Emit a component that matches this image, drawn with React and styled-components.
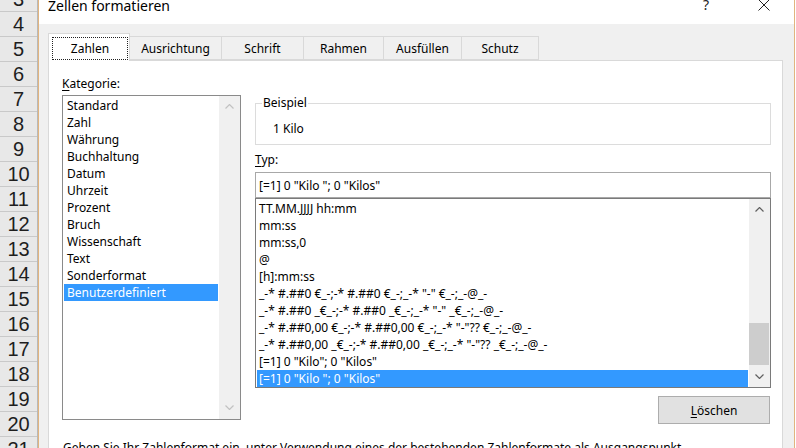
import React from 'react';
import styled, { createGlobalStyle } from 'styled-components';

const UI = `"Noto Sans", "Open Sans", sans-serif`;

const Global = createGlobalStyle`
  html, body { margin: 0; padding: 0; background: #fff; }
  body { width: 796px; height: 448px; overflow: hidden; font-family: ${UI}; }
  * { box-sizing: border-box; }
`;

const Page = styled.div`
  display: flex;
  width: 796px;
  height: 448px;
  overflow: hidden;
  background: #fff;
`;

const RowHeader = styled.div`
  flex: none;
  width: 38px;
  background: #e8e8e8;
  border-right: 1px solid #b9b9b9;
  display: flex;
  flex-direction: column;
  overflow: hidden;
`;

const RowNums = styled.div`
  display: flex;
  flex-direction: column;
  margin-top: -13px;
`;

const RowCell = styled.div`
  flex: none;
  height: 25px;
  border-bottom: 1px solid #c9c9c9;
  display: flex;
  align-items: center;
  justify-content: center;
  font-family: "Liberation Sans", Arial, sans-serif;
  font-size: 20px;
  color: #1e1e1e;
`;

const Dialog = styled.div`
  flex: 1;
  min-width: 0;
  display: flex;
  flex-direction: column;
  background: #f0f0f0;
  border-left: 1px solid #e1b47f;
  border-right: 1px solid #e1b47f;
  margin-right: 1px;
  font-family: ${UI};
  font-size: 12px;
  color: #000;
`;

const TitleBar = styled.div`
  flex: none;
  height: 24px;
  background: #fff;
  display: flex;
  align-items: flex-start;
  padding-left: 9px;
  overflow: hidden;
`;

const Title = styled.div`
  margin-top: -3px;
  font-size: 14px;
  line-height: 18px;
`;

const TitleButtons = styled.div`
  margin-left: auto;
  display: flex;
  gap: 12px;
  padding-right: 7px;
`;

const TitleBtn = styled.div`
  width: 46px;
  display: flex;
  justify-content: center;
  margin-top: ${p => p.$top}px;
  font-size: 14px;
  line-height: 18px;
  color: #222;
`;

const TabStrip = styled.div`
  flex: none;
  height: 36px;
  display: flex;
  align-items: flex-end;
  padding-left: 9px;
  position: relative;
  z-index: 1;
`;

const Tab = styled.div`
  flex: none;
  width: ${p => p.$w}px;
  height: ${p => (p.$active ? 28 : 24)}px;
  margin-left: ${p => (p.$first ? 0 : -1)}px;
  margin-bottom: ${p => (p.$active ? -1 : 0)}px;
  border: 1px solid #d9d9d9;
  border-bottom: ${p => (p.$active ? 'none' : '1px solid #d9d9d9')};
  background: ${p => (p.$active ? '#fff' : '#f0f0f0')};
  display: flex;
  align-items: center;
  justify-content: center;
  font-size: 12px;
  padding-top: ${p => (p.$active ? 0 : 0)}px;
  position: relative;
  z-index: ${p => (p.$active ? 2 : 1)};
`;

const FocusRing = styled.span`
  flex: 1;
  align-self: stretch;
  margin: 3px 1px 1px 3px;
  border: 1px dotted #222;
  display: flex;
  align-items: center;
  justify-content: center;
`;

const Panel = styled.div`
  flex: 1;
  margin: 0 11px 0 9px;
  background: #fff;
  border: 1px solid #d9d9d9;
  border-bottom: none;
  padding: 14px 11px 0 13px;
  display: grid;
  grid-template-columns: 179px 516px;
  grid-template-rows: 348px auto;
  column-gap: 14px;
  align-content: start;
`;

const Column = styled.div`
  display: flex;
  flex-direction: column;
`;

const Label = styled.div`
  height: 17px;
  line-height: 17px;
  margin: ${p => p.$m || '0'};
  u { text-decoration: underline; text-underline-offset: 2px; }
`;

const ListBox = styled.div`
  flex: none;
  height: ${p => p.$h}px;
  border: 1px solid ${p => p.$border};
  background: #fff;
  display: flex;
`;

const Items = styled.div`
  flex: 1;
  padding: 1px;
  display: flex;
  flex-direction: column;
  overflow: hidden;
`;

const Item = styled.div`
  flex: none;
  height: 17px;
  line-height: 17px;
  padding-left: ${p => p.$pad}px;
  white-space: pre;
  background: ${p => (p.$selected ? '#3399ff' : 'transparent')};
  color: ${p => (p.$selected ? '#fff' : '#000')};
`;

const ScrollBar = styled.div`
  flex: none;
  width: 21px;
  background: #f0f0f0;
  display: flex;
  flex-direction: column;
`;

const Arrow = styled.div`
  flex: none;
  height: ${p => p.$h}px;
  display: flex;
  align-items: center;
  justify-content: center;
`;

const Track = styled.div`
  flex: 1;
  display: flex;
  flex-direction: column;
  justify-content: ${p => (p.$end ? 'flex-end' : 'flex-start')};
`;

const Thumb = styled.div`
  height: 42px;
  margin: 0 1px 1px 0;
  background: #cdcdcd;
`;

const Group = styled.fieldset`
  margin: 20px 0 0;
  padding: 9px 10px 7px 17px;
  border: 1px solid #dcdcdc;
  min-width: 0;
  line-height: 17px;
`;

const Legend = styled.legend`
  margin-left: -11px;
  padding: 0 1px;
  line-height: 16px;
`;

const TypeInput = styled.div`
  flex: none;
  height: 26px;
  border: 1px solid #a8a8a8;
  padding-left: 3px;
  display: flex;
  align-items: center;
  white-space: pre;
`;

const ButtonRow = styled.div`
  display: flex;
  justify-content: flex-end;
  margin-top: 8px;
  padding-right: 1px;
`;

const Button = styled.div`
  width: 112px;
  height: 28px;
  background: #e1e1e1;
  border: 1px solid #adadad;
  display: flex;
  align-items: center;
  justify-content: center;
  u { text-decoration: underline; text-underline-offset: 2px; }
`;

const Help = styled.div`
  grid-column: 1 / -1;
  margin-top: 16px;
  padding-left: 1px;
  line-height: 17px;
  white-space: nowrap;
`;

const Chevron = ({ up, color }) => (
  <svg width="9" height="5" viewBox="0 0 9 5" style={{ display: 'block' }}>
    <path
      d={up ? 'M0.5 4.5 L4.5 0.5 L8.5 4.5' : 'M0.5 0.5 L4.5 4.5 L8.5 0.5'}
      fill="none"
      stroke={color}
      strokeWidth="1.2"
    />
  </svg>
);

const CloseIcon = () => (
  <svg width="12" height="12" viewBox="0 0 12 12" style={{ display: 'block' }}>
    <path d="M0.5 0.5 L11.5 11.5 M11.5 0.5 L0.5 11.5" stroke="#222" strokeWidth="1" fill="none" />
  </svg>
);

const rows = Array.from({ length: 19 }, (_, i) => i + 3);

const tabs = [
  { label: 'Zahlen', w: 82 },
  { label: 'Ausrichtung', w: 93 },
  { label: 'Schrift', w: 83 },
  { label: 'Rahmen', w: 81 },
  { label: 'Ausfüllen', w: 79 },
  { label: 'Schutz', w: 78 },
];

const categories = [
  'Standard', 'Zahl', 'Währung', 'Buchhaltung', 'Datum', 'Uhrzeit', 'Prozent',
  'Bruch', 'Wissenschaft', 'Text', 'Sonderformat', 'Benutzerdefiniert',
];

const formats = [
  'TT.MM.JJJJ hh:mm',
  'mm:ss',
  'mm:ss,0',
  '@',
  '[h]:mm:ss',
  '_-* #.##0 €_-;-* #.##0 €_-;_-* "-" €_-;_-@_-',
  '_-* #.##0 _€_-;-* #.##0 _€_-;_-* "-" _€_-;_-@_-',
  '_-* #.##0,00 €_-;-* #.##0,00 €_-;_-* "-"?? €_-;_-@_-',
  '_-* #.##0,00 _€_-;-* #.##0,00 _€_-;_-* "-"?? _€_-;_-@_-',
  '[=1] 0 "Kilo"; 0 "Kilos"',
  '[=1] 0 "Kilo "; 0 "Kilos"',
];

export default function App() {
  return (
    <>
      <Global />
      <Page>
        <RowHeader>
          <RowNums>
            {rows.map(n => (
              <RowCell key={n}>{n}</RowCell>
            ))}
          </RowNums>
        </RowHeader>
        <Dialog>
          <TitleBar>
            <Title>Zellen formatieren</Title>
            <TitleButtons>
              <TitleBtn $top={-4}>?</TitleBtn>
              <TitleBtn $top={-1}>
                <CloseIcon />
              </TitleBtn>
            </TitleButtons>
          </TitleBar>
          <TabStrip>
            {tabs.map((t, i) => (
              <Tab key={t.label} $w={t.w} $first={i === 0} $active={i === 0}>
                {i === 0 ? <FocusRing>{t.label}</FocusRing> : t.label}
              </Tab>
            ))}
          </TabStrip>
          <Panel>
            <Column>
              <Label $m="0 0 3px">
                <u>K</u>ategorie:
              </Label>
              <ListBox $h={325} $border="#8a8a8a">
                <Items>
                  {categories.map((c, i) => (
                    <Item key={c} $pad={3} $selected={i === categories.length - 1}>
                      {c}
                    </Item>
                  ))}
                </Items>
                <ScrollBar>
                  <Arrow $h={20}>
                    <Chevron up color="#c2c2c2" />
                  </Arrow>
                  <Track />
                  <Arrow $h={24}>
                    <Chevron color="#c2c2c2" />
                  </Arrow>
                </ScrollBar>
              </ListBox>
            </Column>
            <Column>
              <Group>
                <Legend>Beispiel</Legend>
                1 Kilo
              </Group>
              <Label $m="6px 0 4px">
                <u>T</u>yp:
              </Label>
              <TypeInput>[=1] 0 "Kilo "; 0 "Kilos"</TypeInput>
              <ListBox $h={190} $border="#7a7a7a">
                <Items>
                  {formats.map((f, i) => (
                    <Item key={f} $pad={2} $selected={i === formats.length - 1}>
                      {f}
                    </Item>
                  ))}
                </Items>
                <ScrollBar>
                  <Arrow $h={21}>
                    <Chevron up color="#606060" />
                  </Arrow>
                  <Track $end>
                    <Thumb />
                  </Track>
                  <Arrow $h={21}>
                    <Chevron color="#606060" />
                  </Arrow>
                </ScrollBar>
              </ListBox>
              <ButtonRow>
                <Button>
                  <span>
                    <u>L</u>öschen
                  </span>
                </Button>
              </ButtonRow>
            </Column>
            <Help>
              Geben Sie Ihr Zahlenformat ein, unter Verwendung eines der bestehenden Zahlenformate als Ausgangspunkt.
            </Help>
          </Panel>
        </Dialog>
      </Page>
    </>
  );
}
